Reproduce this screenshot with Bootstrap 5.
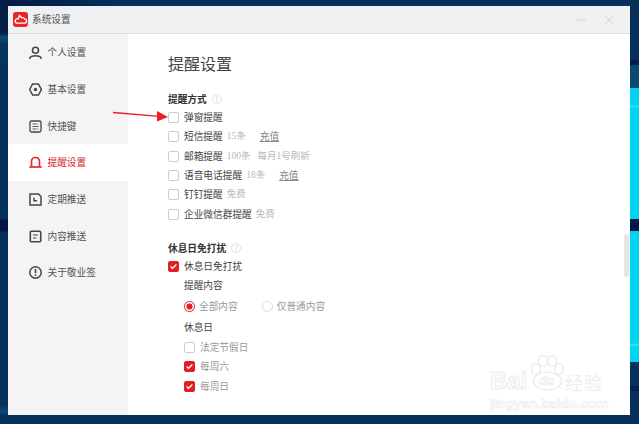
<!DOCTYPE html>
<html lang="zh">
<head>
<meta charset="utf-8">
<title>系统设置</title>
<link rel="stylesheet" href="https://cdn.jsdelivr.net/npm/bootstrap@5.3.0/dist/css/bootstrap.min.css">
<style>
html,body{height:424px;overflow:hidden}
body{width:639px;background:#04305a;font-family:"Noto Sans CJK SC","Liberation Sans",sans-serif;font-size:9.7px;line-height:19px;color:#333;padding:6px 9px 9px 8px}
.desk-bg{position:absolute;inset:0;overflow:hidden;z-index:0}
.band-r{position:absolute;left:630px;top:0;width:9px;height:424px;background:linear-gradient(180deg,#04305a 0 60px,#04204a 60px 65px,#0a4a72 65px 88px,#00d4f0 88px 105px,#40dff2 106px,#00d4f0 108px 219px,#04134a 219px 231px,#00d4f0 231px 343px,#40dff2 345px,#00d4f0 347px 362px,#04305a 362px 386px,#04204a 386px 391px,#04305a 391px)}
.band-l{position:absolute;left:0;top:0;width:8px;height:424px;background:linear-gradient(180deg,#041f48 0 33px,#0b4a78 37px,#06375f 44px,#04305a 70px 219px,#04134a 220px 231px,#04305a 232px 405px,#0b4a78 411px,#04305a 416px)}
.band-t{position:absolute;left:0;top:0;width:100%;height:6px;background:linear-gradient(90deg,#031a44,#04305a 120px)}
.shot-win{position:relative;z-index:1;width:622px;height:409px;background:#fff}
.win-bar{height:28px;background:#eff0f2;border-bottom:1px solid #dcdcdc;padding-left:5px;color:#555;gap:4px}
.logo-box{width:15px;height:15px;border-radius:3px;background:#e8262a;display:block}
.win-ctl{width:10px;height:10px;display:block}
.win-ctls{gap:18px;margin-right:16px}
.win-body{height:381px}
.side-nav{width:120px;background:#f4f4f4;padding-top:.4px}
.nav-row{height:36.67px;padding-left:21px;gap:5.500px;color:#555}
.nav-row.on{background:#fff;color:#d8262c}
.nav-ico{width:13px;height:13px;flex:none}
.main-pane{padding:18px 0 0 40px;position:relative}
.pane-title{font-size:16px;line-height:22px;font-weight:400;color:#444;margin:0 0 16px}
.grp-title{font-size:9.7px;line-height:18px;font-weight:700;color:#333;margin:0;gap:5px}
.q-mark{width:10px;height:10px;border:1px solid #e2e2e2;border-radius:50%;font-size:7px;line-height:8px;text-align:center;color:#d0d0d0;font-weight:400}
.opt-row{height:19.33px;gap:4px;color:#444}
.cbx + span{margin-left:1px}
.muted-note{color:#b8b8b8;font-family:"Liberation Serif","Noto Sans CJK SC",serif;font-size:9.5px}
.top-up{color:#888;text-decoration:underline;margin-left:10px}
.cbx{width:11px;height:11px;border:1px solid #ccc;border-radius:2px;background:#fff;flex:none;display:block}
.cbx.on{background:#e31e24;border-color:#e31e24}
.sub-wrap{padding-left:16px}
.sub-label{height:19px;margin-top:.5px;color:#444}
.sub-label-second{margin-top:1.500px}
.radio-set{height:20px;margin-top:1px;gap:4px;color:#999}
.rad{width:11px;height:11px;border:1px solid #ddd;border-radius:50%;flex:none;background:#fff}
.rad.on{border-color:#e31e24;background:radial-gradient(circle,#e31e24 0 2.800px,#fff 3.300px)}
.rad-second{margin-left:20px}
.light-text{color:#999;height:19.5px}
.first-light{margin-top:.5px}
.note-tight{margin-left:3px}
.gap-sec{margin-top:14.7px}
.scroll-thumb{position:absolute;right:1px;top:200px;width:5px;height:43px;background:#e6e6e6;border-radius:3px}
.arrow-over{position:absolute;left:112px;top:108px;z-index:3}
.wm{position:absolute;left:490px;top:355px;width:116px;height:56px;z-index:3;font-family:"Liberation Sans",sans-serif;color:#fff}
.wm-paw{position:absolute;left:40px;top:0}
.wm-bai{position:absolute;left:0;top:14px;font-size:24px;line-height:24px;font-weight:700;-webkit-text-stroke:1px #ececec}
.wm-cn{position:absolute;left:75px;top:18px;font-size:18px;line-height:18px;font-family:"Noto Sans CJK SC",sans-serif;font-weight:400;letter-spacing:1px;color:#eeeeee}
.wm-url{position:absolute;left:0;top:41px;font-size:13.500px;line-height:15px;white-space:nowrap;font-weight:700;color:#fff;-webkit-text-stroke:.7px #ececec}
.wm-du{font-size:12px;font-weight:700;fill:#fff;stroke:#e8e8e8;stroke-width:.6}
</style>
</head>
<body>
<div class="desk-bg">
  <div class="band-t"></div>
  <div class="band-l"></div>
  <div class="band-r"></div>
</div>
<div class="shot-win d-flex flex-column">
  <div class="win-bar d-flex align-items-center">
    <svg class="logo-box" viewBox="0 0 15 15"><path d="M3.800 11.200h7.600a2 2 0 0 0 .4-4 2.300 2.300 0 0 0-3.200-1.400L6.500 3.500 5.200 6.900A2.200 2.200 0 0 0 3.800 11.200z" fill="none" stroke="#fff" stroke-width="1.300"/></svg>
    <span>系统设置</span>
    <span class="ms-auto d-flex align-items-center win-ctls">
      <svg class="win-ctl" viewBox="0 0 10 10"><path d="M0 5h10" stroke="#d5d5d5" stroke-width="1"/></svg>
      <svg class="win-ctl" viewBox="0 0 10 10"><path d="M0 0l10 10M10 0L0 10" stroke="#d5d5d5" stroke-width="1"/></svg>
    </span>
  </div>
  <div class="win-body d-flex">
    <nav class="side-nav d-flex flex-column">
      <div class="nav-row d-flex align-items-center"><svg class="nav-ico" viewBox="0 0 13 13" fill="none" stroke="#444" stroke-width="1.600"><circle cx="6.500" cy="4.200" r="3"/><path d="M.8 12.200c.5-1.500 2.500-2.500 5.700-2.500s5.200 1 5.700 2.500" stroke-linecap="round"/></svg><span>个人设置</span></div>
      <div class="nav-row d-flex align-items-center"><svg class="nav-ico" viewBox="0 0 13 13"><path d="M3.600 1h5.800l3 5.500-3 5.500H3.600L.7 6.500z" fill="none" stroke="#444" stroke-width="1.500"/><circle cx="6.500" cy="6.500" r="1.700" fill="#444"/></svg><span>基本设置</span></div>
      <div class="nav-row d-flex align-items-center"><svg class="nav-ico" viewBox="0 0 13 13" fill="none" stroke="#444"><rect x="1" y="1" width="11" height="11" rx="1.500" stroke-width="1.300"/><path d="M3.500 4h4M3.500 6.500h6M3.500 9h4M8.500 4h1M8.500 9h1" stroke-width=".9"/></svg><span>快捷键</span></div>
      <div class="nav-row on d-flex align-items-center"><svg class="nav-ico" viewBox="0 0 13 13" fill="none" stroke="#e8262c" stroke-width="1.700"><path d="M2.500 10.500V5.500a4 4 0 0 1 8 0v5"/><path d="M.3 11h12.400"/></svg><span>提醒设置</span></div>
      <div class="nav-row d-flex align-items-center"><svg class="nav-ico" viewBox="0 0 13 13" fill="none" stroke="#444"><path d="M1 1h8.500L12 3.500V12H1z" stroke-width="1.500"/><path d="M5 4.500v3.200h3" stroke-width="1.400"/></svg><span>定期推送</span></div>
      <div class="nav-row d-flex align-items-center"><svg class="nav-ico" viewBox="0 0 13 13" fill="none" stroke="#444"><rect x="1.300" y="1.300" width="10.400" height="10.400" rx="1" stroke-width="1.600"/><path d="M4 5h5M4 8h3.500" stroke-width="1.200"/></svg><span>内容推送</span></div>
      <div class="nav-row d-flex align-items-center"><svg class="nav-ico" viewBox="0 0 13 13" fill="none" stroke="#444"><circle cx="6.500" cy="6.500" r="5.700" stroke-width="1.500"/><path d="M6.500 3v4.200M6.500 8.500V10" stroke-width="1.600"/></svg><span>关于敬业签</span></div>
    </nav>
    <main class="main-pane flex-grow-1">
      <h1 class="pane-title">提醒设置</h1>
      <h2 class="grp-title d-flex align-items-center">提醒方式<span class="q-mark">?</span></h2>
      <div class="opt-row d-flex align-items-center"><span class="cbx"></span><span>弹窗提醒</span></div>
      <div class="opt-row d-flex align-items-center"><span class="cbx"></span><span>短信提醒</span><span class="muted-note">15条</span><span class="top-up">充值</span></div>
      <div class="opt-row d-flex align-items-center"><span class="cbx"></span><span>邮箱提醒</span><span class="muted-note">100条</span><span class="muted-note note-tight">每月1号刷新</span></div>
      <div class="opt-row d-flex align-items-center"><span class="cbx"></span><span>语音电话提醒</span><span class="muted-note">18条</span><span class="top-up">充值</span></div>
      <div class="opt-row d-flex align-items-center"><span class="cbx"></span><span>钉钉提醒</span><span class="muted-note">免费</span></div>
      <div class="opt-row d-flex align-items-center"><span class="cbx"></span><span>企业微信群提醒</span><span class="muted-note">免费</span></div>
      <h2 class="grp-title gap-sec d-flex align-items-center">休息日免打扰<span class="q-mark">?</span></h2>
      <div class="opt-row d-flex align-items-center"><svg class="cbx on" viewBox="0 0 11 11"><path d="M2 5.500l2.300 2.300L9 3" fill="none" stroke="#fff" stroke-width="1.600"/></svg><span>休息日免打扰</span></div>
      <div class="sub-wrap">
        <div class="sub-label">提醒内容</div>
        <div class="radio-set d-flex align-items-center"><span class="rad on"></span><span>全部内容</span><span class="rad rad-second"></span><span>仅普通内容</span></div>
        <div class="sub-label sub-label-second">休息日</div>
        <div class="opt-row d-flex align-items-center light-text first-light"><span class="cbx"></span><span>法定节假日</span></div>
        <div class="opt-row d-flex align-items-center light-text"><svg class="cbx on" viewBox="0 0 11 11"><path d="M2 5.500l2.300 2.300L9 3" fill="none" stroke="#fff" stroke-width="1.600"/></svg><span>每周六</span></div>
        <div class="opt-row d-flex align-items-center light-text"><svg class="cbx on" viewBox="0 0 11 11"><path d="M2 5.500l2.300 2.300L9 3" fill="none" stroke="#fff" stroke-width="1.600"/></svg><span>每周日</span></div>
      </div>
      <div class="scroll-thumb"></div>
    </main>
  </div>
</div>
<svg class="arrow-over" width="60" height="16" viewBox="0 0 60 16"><path d="M1 4.500L47 8.300" stroke="#ee1c25" stroke-width="1.300"/><path d="M45 3L56 9 45 13.500z" fill="#ee1c25"/></svg>
<div class="wm">
  <svg class="wm-paw" width="35" height="36" viewBox="0 0 35 36" fill="#fff" stroke="#e8e8e8" stroke-width="1.200">
    <ellipse cx="6" cy="14" rx="4.500" ry="5.500"/>
    <ellipse cx="13" cy="6" rx="4.500" ry="5.500"/>
    <ellipse cx="22" cy="6" rx="4.500" ry="5.500"/>
    <ellipse cx="29" cy="14" rx="4.500" ry="5.500"/>
    <ellipse cx="17.500" cy="26" rx="14" ry="9"/>
    <text class="wm-du" x="9.500" y="30">du</text>
  </svg>
  <div class="wm-bai">Bai</div>
  <div class="wm-cn">经验</div>
  <div class="wm-url">jingyan.baidu.com</div>
</div>
<script src="https://cdn.jsdelivr.net/npm/bootstrap@5.3.0/dist/js/bootstrap.bundle.min.js"></script>
</body>
</html>
